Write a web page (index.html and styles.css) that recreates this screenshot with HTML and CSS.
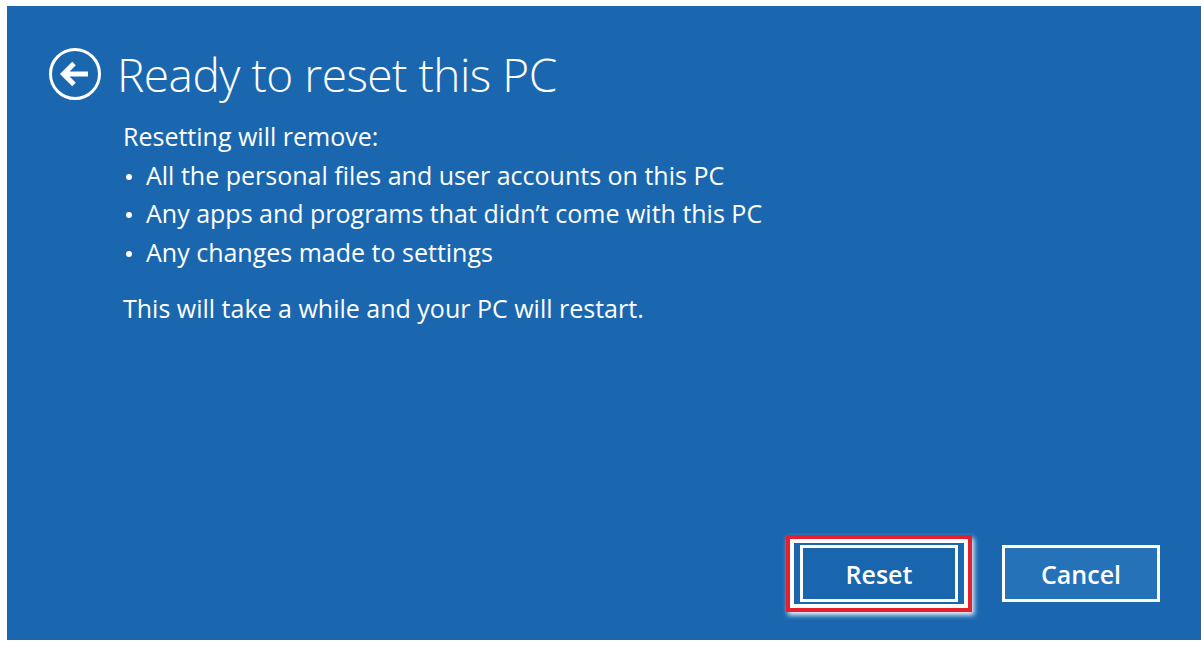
FILE: index.html
```html
<!DOCTYPE html>
<html lang="en">
<head>
<meta charset="utf-8">
<title>Ready to reset this PC</title>
<link rel="stylesheet" href="styles.css">
</head>
<body>
<main class="panel">
  <header class="head">
    <svg class="back" width="54" height="54" viewBox="0 0 54 54" aria-hidden="true">
      <circle cx="27" cy="27" r="24.5" fill="none" stroke="#fff" stroke-width="3"/>
      <path d="M40 27H16M26 16.5L15.5 27L26 37.5" fill="none" stroke="#fff" stroke-width="5" stroke-linejoin="miter"/>
    </svg>
    <h1 class="title">Ready to reset this PC</h1>
  </header>
  <section class="content">
    <p class="lead">Resetting will remove:</p>
    <ul class="list">
      <li>All the personal files and user accounts on this PC</li>
      <li>Any apps and programs that didn’t come with this PC</li>
      <li>Any changes made to settings</li>
    </ul>
    <p class="note">This will take a while and your PC will restart.</p>
  </section>
  <footer class="actions">
    <div class="highlight"><button class="btn">Reset</button></div>
    <button class="btn btn-cancel">Cancel</button>
  </footer>
</main>
</body>
</html>
```
FILE: styles.css
```css
html, body { height: 100%; }
body {
  margin: 0;
  padding: 6px 0 6px 7px;
  box-sizing: border-box;
  background: #fff;
  font-family: "Open Sans", "Noto Sans", sans-serif;
  color: #fff;
}
.panel {
  height: 100%;
  background: #1a67b0;
  display: flex;
  flex-direction: column;
  padding: 0 41px 28px 41px;
  box-sizing: border-box;
}
.head {
  display: flex;
  align-items: center;
  gap: 15px;
  margin-top: 41px;
}
.back { display: block; flex: none; }
.title {
  margin: 0;
  font-weight: 300;
  font-size: 46px;
  line-height: 54px;
  letter-spacing: -0.5px;
}
.content {
  margin-left: 75px;
  font-size: 25px;
  line-height: 38.6px;
  margin-top: 16px;
}
.lead, .note { margin: 0; }
.list { list-style: none; margin: 0; padding: 0; }
.list li { position: relative; padding-left: 23px; }
.list li::before {
  content: "";
  position: absolute;
  left: 3px;
  top: 18px;
  width: 6px;
  height: 6px;
  border-radius: 50%;
  background: #fff;
}
.note { margin-top: 18px; }
.actions {
  margin-top: auto;
  display: flex;
  justify-content: flex-end;
  align-items: center;
  gap: 30px;
}
.highlight {
  border: 4px solid #e3202b;
  padding: 6px 10px;
  box-shadow: inset 0 0 0 4px #fff, 2px 3px 5px rgba(255,255,255,0.95);
}
.btn {
  display: block;
  width: 158px;
  height: 57px;
  box-sizing: border-box;
  border: 3px solid #fff;
  background: #1a66ae;
  color: #fff;
  font-family: "Open Sans", "Noto Sans", sans-serif;
  font-weight: 600;
  font-size: 25px;
  padding: 0;
}
.btn-cancel { background: #2572b9; }
```
